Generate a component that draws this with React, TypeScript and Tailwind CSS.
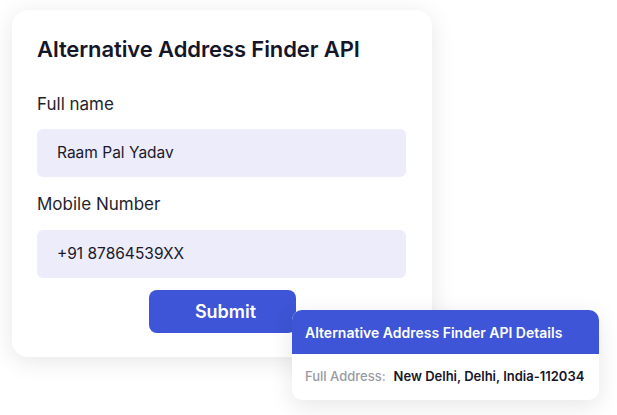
import React from "react";

export default function App() {
  return (
    <div
      className="relative w-[617px] h-[415px] bg-white overflow-hidden"
      style={{ fontFamily: "Inter, 'Noto Sans', sans-serif" }}
    >
      <div className="ml-[12px] mt-[10px] w-[420px] h-[347px] rounded-[16px] bg-white shadow-[0_4px_24px_rgba(0,0,0,0.10)] px-[25px] pt-[25px] flex flex-col">
        <h1 className="text-[22px] leading-[28px] font-semibold text-[#161629] tracking-[-0.1px]">
          Alternative Address Finder API
        </h1>
        <label className="mt-[29px] text-[17px] leading-[24px] text-[#1f1f2e]">Full name</label>
        <div className="mt-[13px] h-[48px] w-[369px] rounded-[6px] bg-[#ececfb] flex items-center pl-[20px] text-[15.5px] text-[#1a1a2a]">
          Raam Pal Yadav
        </div>
        <label className="mt-[15px] text-[17px] leading-[24px] text-[#1f1f2e]">Mobile Number</label>
        <div className="mt-[14px] h-[48px] w-[369px] rounded-[6px] bg-[#ececfb] flex items-center pl-[20px] text-[15.5px] text-[#1a1a2a]">
          +91 87864539XX
        </div>
        <div className="mt-[12px] flex justify-center">
          <button className="w-[147px] h-[43px] rounded-[8px] bg-[#3d55d6] text-white text-[18px] font-semibold pl-[7px]">
            Submit
          </button>
        </div>
      </div>

      <div className="absolute left-[292px] top-[310px] w-[307px] h-[90px] rounded-[10px] bg-white shadow-[0_6px_24px_rgba(0,0,0,0.10)] overflow-hidden flex flex-col">
        <div className="h-[44px] bg-[#3d55d6] flex items-center pl-[13px] text-white text-[14px] font-semibold">
          Alternative Address Finder API Details
        </div>
        <div className="flex-1 flex items-center pl-[13px] text-[13px]">
          <span className="text-[#9a9aa5] font-medium">Full Address:</span>
          <span className="ml-[8px] text-[#161629] font-semibold">New Delhi, Delhi, India-112034</span>
        </div>
      </div>
    </div>
  );
}
